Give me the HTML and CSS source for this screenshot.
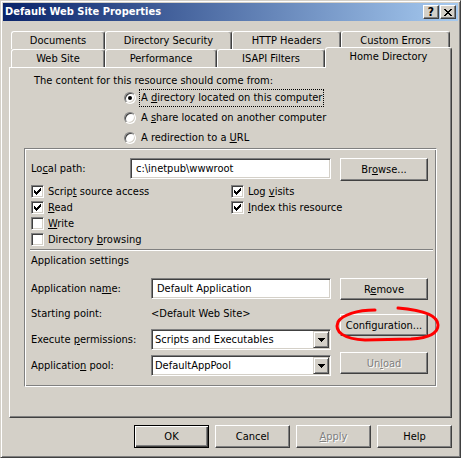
FILE: index.html
```html
<!DOCTYPE html>
<html lang="en">
<head>
  <meta charset="UTF-8">
  <title>Default Web Site Properties</title>
  <link rel="stylesheet" href="styles.css">
</head>
<body>

  <div class="window">
    <!-- Caption bar -->
    <div class="titlebar">
      <span class="title">Default Web Site Properties</span>
      <div class="caption-buttons">
        <span class="cap-btn">?</span>
        <span class="cap-btn">
          <svg width="8" height="7" viewBox="0 0 8 7"><path d="M0 0h2v1H0zM6 0h2v1H6zM1 1h2v1H1zM5 1h2v1H5zM2 2h4v1H2zM3 3h2v1H3zM2 4h4v1H2zM1 5h2v1H1zM5 5h2v1H5zM0 6h2v1H0zM6 6h2v1H6z"/></svg>
        </span>
      </div>
    </div>

    <div class="client">
      <!-- Property sheet tabs, two rows -->
      <div class="tabs">
        <div class="tab-row">
          <div class="tab w-documents">Documents</div>
          <div class="tab w-dirsec">Directory Security</div>
          <div class="tab w-http">HTTP Headers</div>
          <div class="tab w-errors">Custom Errors</div>
        </div>
        <div class="tab-row">
          <div class="tab w-website">Web Site</div>
          <div class="tab w-perf">Performance</div>
          <div class="tab w-isapi">ISAPI Filters</div>
          <div class="tab selected w-home">Home Directory</div>
        </div>
      </div>

      <div class="panel">
        <p class="intro">The content for this resource should come from:</p>

        <div class="radio-list">
          <div class="radio checked"><span class="radio-box"></span><span class="radio-label focus">A <u>d</u>irectory located on this computer</span></div>
          <div class="radio"><span class="radio-box"></span><span class="radio-label">A <u>s</u>hare located on another computer</span></div>
          <div class="radio"><span class="radio-box"></span><span class="radio-label">A redirection to a <u>U</u>RL</span></div>
        </div>

        <div class="groupbox">
          <div class="path-row">
            <span class="path-label">Lo<u>c</u>al path:</span>
            <div class="field path-field">c:\inetpub\wwwroot</div>
            <button class="btn browse">Br<u>o</u>wse...</button>
          </div>

          <div class="checks">
            <div class="check-col">
              <div class="check"><span class="check-box"><svg width="7" height="7" viewBox="0 0 7 7"><path d="M0 2h1v3H0zM1 3h1v3H1zM2 4h1v3H2zM3 3h1v3H3zM4 2h1v3H4zM5 1h1v3H5zM6 0h1v3H6z"/></svg></span><span>Scrip<u>t</u> source access</span></div>
              <div class="check"><span class="check-box"><svg width="7" height="7" viewBox="0 0 7 7"><path d="M0 2h1v3H0zM1 3h1v3H1zM2 4h1v3H2zM3 3h1v3H3zM4 2h1v3H4zM5 1h1v3H5zM6 0h1v3H6z"/></svg></span><span><u>R</u>ead</span></div>
              <div class="check"><span class="check-box"></span><span><u>W</u>rite</span></div>
              <div class="check"><span class="check-box"></span><span>Directory <u>b</u>rowsing</span></div>
            </div>
            <div class="check-col">
              <div class="check"><span class="check-box"><svg width="7" height="7" viewBox="0 0 7 7"><path d="M0 2h1v3H0zM1 3h1v3H1zM2 4h1v3H2zM3 3h1v3H3zM4 2h1v3H4zM5 1h1v3H5zM6 0h1v3H6z"/></svg></span><span>Log <u>v</u>isits</span></div>
              <div class="check"><span class="check-box"><svg width="7" height="7" viewBox="0 0 7 7"><path d="M0 2h1v3H0zM1 3h1v3H1zM2 4h1v3H2zM3 3h1v3H3zM4 2h1v3H4zM5 1h1v3H5zM6 0h1v3H6z"/></svg></span><span><u>I</u>ndex this resource</span></div>
            </div>
          </div>

          <div class="separator"></div>
          <div class="section-label">Application settings</div>

          <div class="app">
            <div class="app-fields">
              <div class="app-row">
                <span class="app-label">Application na<u>m</u>e:</span>
                <div class="field app-field">Default Application</div>
              </div>
              <div class="app-row gap-4">
                <span class="app-label">Starting point:</span>
                <span class="app-value">&lt;Default Web Site&gt;</span>
              </div>
              <div class="app-row">
                <span class="app-label">Execute <u>p</u>ermissions:</span>
                <div class="field combo">
                  <span class="combo-text">Scripts and Executables</span>
                  <span class="combo-btn"><svg width="7" height="4" viewBox="0 0 7 4"><path d="M0 0h7v1H0zM1 1h5v1H1zM2 2h3v1H2zM3 3h1v1H3z"/></svg></span>
                </div>
              </div>
              <div class="app-row">
                <span class="app-label">Applicatio<u>n</u> pool:</span>
                <div class="field combo">
                  <span class="combo-text">DefaultAppPool</span>
                  <span class="combo-btn"><svg width="7" height="4" viewBox="0 0 7 4"><path d="M0 0h7v1H0zM1 1h5v1H1zM2 2h3v1H2zM3 3h1v1H3z"/></svg></span>
                </div>
              </div>
            </div>
            <div class="app-buttons">
              <button class="btn side">R<u>e</u>move</button>
              <button class="btn side config">Configuration...</button>
              <button class="btn side unload disabled">Un<u>l</u>oad</button>
            </div>
          </div>
        </div>
      </div>

      <!-- OK / Cancel / Apply / Help -->
      <div class="dialog-buttons">
        <button class="btn push default">OK</button>
        <button class="btn push">Cancel</button>
        <button class="btn push disabled"><u>A</u>pply</button>
        <button class="btn push">Help</button>
      </div>
    </div>

    <!-- hand-drawn red circle round the Configuration button -->
    <svg class="markup" width="461" height="458" viewBox="0 0 461 458">
      <path d="M374 309 C356 309 341 314 337 321 C333 331 343 338 364 339 L410 338 C428 337 437 332 437 324 C437 314 421 309 397 307" fill="none" stroke="#ff0000" stroke-width="3" stroke-linecap="round"/>
    </svg>
  </div>

</body>
</html>
```

FILE: styles.css
```css
/* Classic grey dialog */
body {
  margin: 0;
  font-family: "DejaVu Sans Condensed", "Liberation Sans", sans-serif;
  font-size: 11px;
  color: #000;
  background: #d4d0c8;
}

button {
  font: inherit;
  color: inherit;
  padding: 0;
  margin: 0;
}

p {
  margin: 0;
}

/* Window frame */
.window {
  position: relative;
  width: 461px;
  height: 458px;
  box-sizing: border-box;
  padding: 2px;
  background: #d4d0c8;
  border: 1px solid;
  border-color: #d4d0c8 #404040 #404040 #d4d0c8;
  box-shadow: inset 1px 1px #fff, inset -1px -1px #808080;
}

/* Title bar */
.titlebar {
  height: 18px;
  display: flex;
  align-items: flex-start;
  justify-content: space-between;
  padding: 0 2px;
  background: linear-gradient(to right, #0a246a, #a6caf0);
}

.title {
  color: #fff;
  font-weight: bold;
  line-height: 18px;
}

.caption-buttons {
  display: flex;
  gap: 1px;
  margin-top: 2px;
}

.cap-btn {
  width: 16px;
  height: 14px;
  box-sizing: border-box;
  display: flex;
  align-items: center;
  justify-content: center;
  font-weight: bold;
  font-size: 12px;
  background: #d4d0c8;
  border: 1px solid;
  border-color: #fff #404040 #404040 #fff;
  box-shadow: inset -1px -1px #808080;
}

/* Client area */
.client {
  padding: 10px 6px 0 6px;
}

.tabs {
  padding-left: 2px;
}

.tab-row {
  display: flex;
  height: 18px;
}

.tab {
  height: 18px;
  box-sizing: border-box;
  border-top: 1px solid #fff;
  border-left: 1px solid #fff;
  border-right: 1px solid #404040;
  border-radius: 3px 3px 0 0;
  box-shadow: inset -1px 0 #808080;
  background: #d4d0c8;
  text-align: center;
  line-height: 17px;
}

.tab.selected {
  position: relative;
  z-index: 1;
  height: 21px;
  margin-top: -2px;
  line-height: 18px;
}

.w-documents { width: 94px; }
.w-dirsec { width: 127px; }
.w-http { width: 109px; }
.w-errors { width: 109px; }
.w-website { width: 94px; }
.w-perf { width: 112px; }
.w-isapi { width: 108px; }
.w-home { width: 127px; }

/* Page panel */
.panel {
  height: 351px;
  box-sizing: border-box;
  border: 1px solid;
  border-color: #fff #404040 #404040 #fff;
  box-shadow: inset -1px -1px #808080;
}

.intro {
  margin: 6px 0 0 24px;
  line-height: 13px;
}

.radio-list {
  margin: 1px 0 0 114px;
}

.radio {
  height: 20px;
  display: flex;
  align-items: center;
  gap: 3px;
}

.radio-box {
  position: relative;
  width: 12px;
  height: 12px;
  box-sizing: border-box;
  border-radius: 50%;
  border: 1px solid;
  border-color: #808080 #fff #fff #808080;
  box-shadow: inset 1px 1px #404040, inset -1px -1px #d4d0c8;
  background: #fff;
}

.radio.checked .radio-box::after {
  content: "";
  position: absolute;
  left: 3px;
  top: 3px;
  width: 4px;
  height: 4px;
  border-radius: 50%;
  background: #000;
}

.radio-label {
  padding: 1px;
  line-height: 14px;
  border: 1px dotted transparent;
}

.radio-label.focus {
  border-color: #000;
}

/* Etched group box */
.groupbox {
  margin: 0 14px 0 14px;
  padding: 9px 0 10px 6px;
  border: 1px solid;
  border-color: #808080 #fff #fff #808080;
  box-shadow: inset 1px 1px #fff, inset -1px -1px #808080;
}

.path-row {
  display: flex;
  align-items: flex-start;
  height: 23px;
}

.path-label {
  width: 99px;
  line-height: 21px;
}

.field {
  height: 21px;
  box-sizing: border-box;
  background: #fff;
  border: 1px solid;
  border-color: #808080 #fff #fff #808080;
  box-shadow: inset 1px 1px #404040, inset -1px -1px #d4d0c8;
  padding: 0 4px 0 5px;
  line-height: 19px;
}

.path-field {
  width: 201px;
}

/* Raised push buttons */
.btn {
  box-sizing: border-box;
  background: #d4d0c8;
  border: 1px solid;
  border-color: #fff #404040 #404040 #fff;
  box-shadow: inset -1px -1px #808080;
  text-align: center;
}

.btn.browse {
  width: 88px;
  height: 23px;
  margin-left: 9px;
}

.btn.disabled {
  color: #808080;
  text-shadow: 1px 1px #fff;
}

.checks {
  display: flex;
  margin-top: 2px;
}

.check-col {
  width: 200px;
}

.check {
  height: 16px;
  display: flex;
  align-items: center;
  gap: 4px;
}

.check-box {
  width: 13px;
  height: 13px;
  box-sizing: border-box;
  padding: 2px;
  display: flex;
  background: #fff;
  border: 1px solid;
  border-color: #808080 #fff #fff #808080;
  box-shadow: inset 1px 1px #404040, inset -1px -1px #d4d0c8;
}

.separator {
  margin: 2px 3px 0 -1px;
  height: 0;
  border-top: 1px solid #808080;
  border-bottom: 1px solid #fff;
}

.section-label {
  margin-top: 3px;
  line-height: 13px;
}

/* Application settings */
.app {
  display: flex;
  margin-top: 11px;
}

.app-row {
  display: flex;
  align-items: center;
  height: 21px;
  margin-top: 5px;
}

.app-row:first-child {
  margin-top: 0;
}

.app-row.gap-4 {
  margin-top: 4px;
}

.app-label {
  width: 120px;
}

.app-field {
  width: 180px;
}

.combo {
  width: 180px;
  display: flex;
  justify-content: space-between;
  padding: 1px 1px 1px 3px;
  line-height: 17px;
}

.combo-btn {
  width: 16px;
  height: 17px;
  box-sizing: border-box;
  display: flex;
  align-items: center;
  justify-content: center;
  background: #d4d0c8;
  border: 1px solid;
  border-color: #d4d0c8 #404040 #404040 #d4d0c8;
  box-shadow: inset 1px 1px #fff, inset -1px -1px #808080;
}

.app-buttons {
  display: flex;
  flex-direction: column;
  margin-left: 9px;
}

.btn.side {
  width: 88px;
  height: 22px;
}

.btn.config {
  margin-top: 14px;
}

.btn.unload {
  margin-top: 16px;
}

/* Bottom row of dialog buttons */
.dialog-buttons {
  display: flex;
  justify-content: flex-end;
  gap: 6px;
  margin-top: 7px;
}

.btn.push {
  width: 75px;
  height: 23px;
}

.btn.default {
  border-color: #000;
  box-shadow: inset 1px 1px #fff, inset -1px -1px #404040, inset -2px -2px #808080;
}

.markup {
  position: absolute;
  left: 0;
  top: 0;
  pointer-events: none;
}
```
